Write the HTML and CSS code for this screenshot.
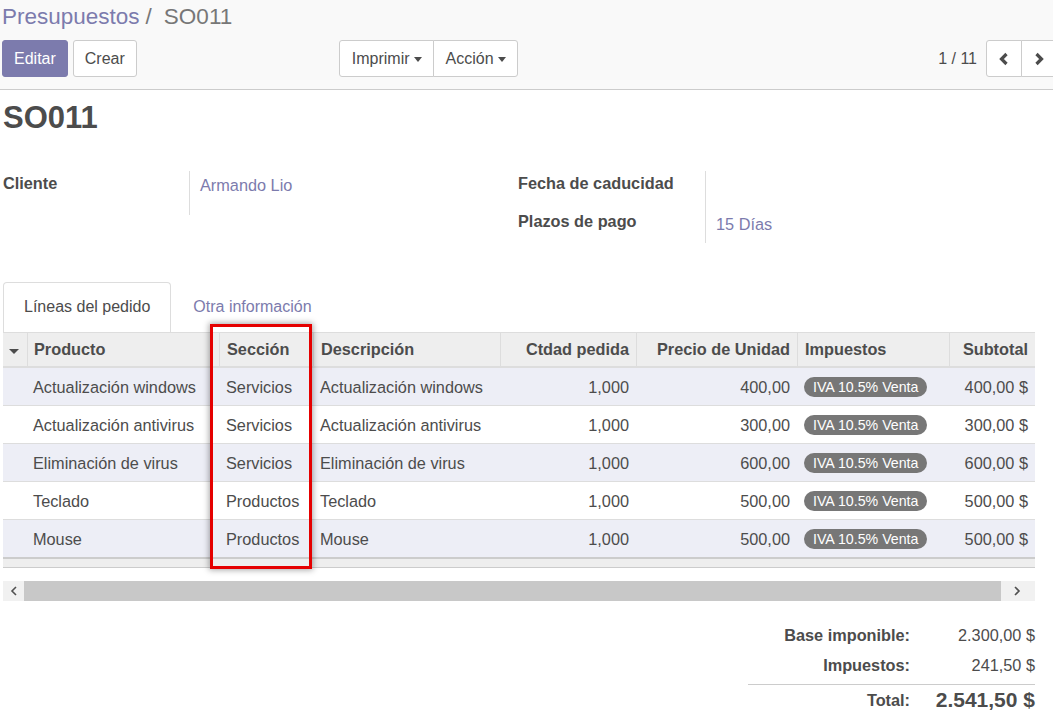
FILE: index.html
```html
<!DOCTYPE html>
<html lang="es">
<head>
<meta charset="utf-8">
<title>SO011</title>
<link rel="stylesheet" href="styles.css">
</head>
<body>
<div class="cp">
  <ol class="breadcrumb">
    <li class="crumb-link">Presupuestos</li>
    <li class="crumb-sep">/</li>
    <li class="crumb-active">SO011</li>
  </ol>
  <div class="cp-row">
    <div class="cp-buttons">
      <button class="btn btn-primary">Editar</button>
      <button class="btn btn-secondary">Crear</button>
    </div>
    <div class="btn-group sidebar">
      <button class="btn">Imprimir<span class="caret"></span></button>
      <button class="btn">Acción<span class="caret"></span></button>
    </div>
    <div class="pager">
      <span class="pager-value">1 / 11</span>
      <div class="btn-group">
        <button class="btn btn-icon" aria-label="Anterior"><svg width="12" height="14" viewBox="0 0 12 14"><polyline points="8.5,2 3.5,7 8.5,12" fill="none" stroke="#4c4c4c" stroke-width="3.2"/></svg></button>
        <button class="btn btn-icon" aria-label="Siguiente"><svg width="12" height="14" viewBox="0 0 12 14"><polyline points="3.5,2 8.5,7 3.5,12" fill="none" stroke="#4c4c4c" stroke-width="3.2"/></svg></button>
      </div>
    </div>
  </div>
</div>

<div class="sheet">
  <h1 class="title">SO011</h1>

  <div class="groups">
    <div class="group group-left">
      <div class="field field-client">
        <div class="label">Cliente</div>
        <div class="value link">Armando Lio</div>
      </div>
    </div>
    <div class="group group-right">
      <div class="field field-r1">
        <div class="label">Fecha de caducidad</div>
        <div class="value"></div>
      </div>
      <div class="field field-r2">
        <div class="label">Plazos de pago</div>
        <div class="value link">15 Días</div>
      </div>
    </div>
  </div>

  <div class="tabs">
    <div class="tab active">Líneas del pedido</div>
    <div class="tab">Otra información</div>
  </div>

  <div class="table-wrap">
    <table class="lines">
      <colgroup>
        <col class="c-caret"><col class="c-prod"><col class="c-sec"><col class="c-desc"><col class="c-qty"><col class="c-price"><col class="c-tax"><col class="c-sub">
      </colgroup>
      <thead>
        <tr>
          <th class="th-caret"><span class="sort-caret"></span></th>
          <th>Producto</th>
          <th>Sección</th>
          <th>Descripción</th>
          <th class="num">Ctdad pedida</th>
          <th class="num">Precio de Unidad</th>
          <th>Impuestos</th>
          <th class="num">Subtotal</th>
        </tr>
      </thead>
      <tbody>
        <tr class="odd"><td></td><td>Actualización windows</td><td>Servicios</td><td>Actualización windows</td><td class="num">1,000</td><td class="num">400,00</td><td><span class="badge">IVA 10.5% Venta</span></td><td class="num">400,00 $</td></tr>
        <tr><td></td><td>Actualización antivirus</td><td>Servicios</td><td>Actualización antivirus</td><td class="num">1,000</td><td class="num">300,00</td><td><span class="badge">IVA 10.5% Venta</span></td><td class="num">300,00 $</td></tr>
        <tr class="odd"><td></td><td>Eliminación de virus</td><td>Servicios</td><td>Eliminación de virus</td><td class="num">1,000</td><td class="num">600,00</td><td><span class="badge">IVA 10.5% Venta</span></td><td class="num">600,00 $</td></tr>
        <tr><td></td><td>Teclado</td><td>Productos</td><td>Teclado</td><td class="num">1,000</td><td class="num">500,00</td><td><span class="badge">IVA 10.5% Venta</span></td><td class="num">500,00 $</td></tr>
        <tr class="odd last"><td></td><td>Mouse</td><td>Productos</td><td>Mouse</td><td class="num">1,000</td><td class="num">500,00</td><td><span class="badge">IVA 10.5% Venta</span></td><td class="num">500,00 $</td></tr>
      </tbody>
      <tfoot>
        <tr><td colspan="8"></td></tr>
      </tfoot>
    </table>
  </div>

  <div class="hscroll">
    <div class="sb-btn"><svg width="8" height="10" viewBox="0 0 8 10"><polyline points="6,1 2,5 6,9" fill="none" stroke="#505050" stroke-width="1.6"/></svg></div>
    <div class="sb-thumb"></div>
    <div class="sb-track"></div>
    <div class="sb-btn sb-right"><svg width="8" height="10" viewBox="0 0 8 10"><polyline points="2,1 6,5 2,9" fill="none" stroke="#505050" stroke-width="1.6"/></svg></div>
  </div>

  <div class="totals">
    <div class="t-label">Base imponible:</div><div class="t-value">2.300,00 $</div>
    <div class="t-label">Impuestos:</div><div class="t-value">241,50 $</div>
    <div class="t-label t-total">Total:</div><div class="t-value t-total t-big">2.541,50 $</div>
  </div>
</div>

<div class="highlight"></div>
</body>
</html>
```

FILE: styles.css
```css
html, body {
  margin: 0;
  padding: 0;
  overflow: hidden;
  background: #fff;
}
body {
  font-family: "Liberation Sans", Arial, sans-serif;
  font-size: 16.3px;
  color: #4c4c4c;
  position: relative;
  width: 1053px;
  height: 717px;
}

/* Control panel */
.cp {
  background: #f9f9f9;
  border-bottom: 1px solid #cccccc;
  padding: 2px 0 12px 2px;
  overflow: hidden;
}
.breadcrumb {
  display: flex;
  list-style: none;
  margin: 0 0 8px 0;
  padding: 0;
  font-size: 22.5px;
  line-height: 30px;
  height: 30px;
}
.crumb-link { color: #7c7bad; }
.crumb-sep { color: #777; margin: 0 12px 0 6px; }
.crumb-active { color: #777; }

.cp-row {
  display: flex;
  align-items: center;
  height: 37px;
}
.btn {
  height: 37px;
  box-sizing: border-box;
  border: 1px solid #cccccc;
  background: #fff;
  color: #4c4c4c;
  font-family: inherit;
  font-size: 16px;
  padding: 0 11px;
  margin: 0;
  border-radius: 3px;
  display: inline-flex;
  align-items: center;
  cursor: pointer;
}
.btn-primary {
  background: #7c7bad;
  border-color: #7c7bad;
  color: #fff;
}
.btn-secondary { margin-left: 5px; }
.cp-buttons { display: flex; }

.btn-group { display: flex; }
.btn-group .btn { border-radius: 0; }
.btn-group .btn + .btn { margin-left: -1px; }
.btn-group .btn:first-child { border-radius: 3px 0 0 3px; }
.btn-group .btn:last-child { border-radius: 0 3px 3px 0; }

.sidebar { margin-left: 202px; }
.sidebar .btn { padding: 0 11px 0 12px; }
.caret {
  display: inline-block;
  width: 0;
  height: 0;
  margin-left: 4px;
  margin-top: 2px;
  border-top: 5px solid #4c4c4c;
  border-left: 4.5px solid transparent;
  border-right: 4.5px solid transparent;
}

.pager {
  margin-left: auto;
  margin-right: -4px;
  display: flex;
  align-items: center;
}
.pager-value { margin-right: 9px; font-size: 16px; }
.btn-icon {
  width: 36px;
  padding: 0;
  justify-content: center;
}

/* Sheet */
.sheet {
  padding: 0 0 0 3px;
}
.title {
  margin: 9px 0 0 0;
  font-size: 31px;
  line-height: 38px;
  font-weight: bold;
  color: #4c4c4c;
}

.groups {
  display: flex;
  margin-top: 34px;
}
.group-left { width: 515px; }
.group-right { width: 517px; }
.field { display: flex; }
.label {
  font-weight: bold;
  line-height: 20px;
  border-right: 1px solid #dddddd;
  box-sizing: border-box;
}
.value {
  line-height: 20px;
  padding-left: 10px;
}
.link { color: #7c7bad; }

.group-left .label { width: 187px; height: 44px; padding-top: 2px; }
.group-left .value { padding-top: 4px; }
.group-right .label { width: 188px; }
.field-r1 .label { height: 36px; padding-top: 2px; }
.field-r2 .label { height: 36px; padding-top: 4px; }
.field-r2 .value { padding-top: 7px; }

/* Tabs */
.tabs {
  display: flex;
  margin-top: 39px;
}
.tab {
  padding: 14px 20px 15px;
  line-height: 20px;
  border: 1px solid transparent;
  border-bottom: 0;
  border-radius: 4px 4px 0 0;
  margin-right: 1px;
  color: #7c7bad;
  font-size: 16px;
}
.tab.active {
  border-color: #dddddd;
  color: #4c4c4c;
  background: #fff;
}

/* Table */
.table-wrap {
  width: 1032px;
  overflow: hidden;
}
.lines {
  width: 1032px;
  table-layout: fixed;
  border-collapse: separate;
  border-spacing: 0;
}
.c-caret { width: 24px; }
.c-prod { width: 192px; }
.c-sec { width: 94px; }
.c-desc { width: 187px; }
.c-qty { width: 136px; }
.c-price { width: 161px; }
.c-tax { width: 152px; }
.c-sub { width: 86px; }

.lines th {
  background: #eeeeee;
  font-weight: bold;
  text-align: left;
  line-height: 20px;
  padding: 6px 7px 7px;
  border-top: 1px solid #dddddd;
  border-bottom: 2px solid #dddddd;
  border-left: 1px solid #dddddd;
  white-space: nowrap;
  overflow: hidden;
}
.lines th:nth-child(2) { padding-left: 6px; }
.lines th.th-caret {
  border-left: 0;
  padding: 0;
  text-align: center;
}
.sort-caret {
  display: inline-block;
  width: 0;
  height: 0;
  border-top: 5px solid #4c4c4c;
  border-left: 5px solid transparent;
  border-right: 5px solid transparent;
  vertical-align: middle;
  margin-right: 2px;
}
.lines td {
  line-height: 20px;
  padding: 9px 7px 8px;
  border-bottom: 1px solid #dddddd;
  white-space: nowrap;
  overflow: hidden;
}
.lines td:nth-child(2) { padding-left: 6px; }
.lines tr.odd td { background: #edeef6; }
.lines tr.last td { border-bottom: 2px solid #cccccc; }
.lines .num { text-align: right; }
.lines tfoot td {
  background: #eeeeee;
  height: 8px;
  padding: 0;
  border-bottom: 1px solid #cccccc;
}

.badge {
  display: inline-block;
  background: #777777;
  color: #fff;
  font-size: 14.2px;
  line-height: 20px;
  padding: 0 9px;
  border-radius: 10px;
  vertical-align: top;
}

/* fake horizontal scrollbar */
.hscroll {
  display: flex;
  width: 1032px;
  height: 20px;
  margin-top: 13px;
  background: #f1f1f1;
}
.sb-btn {
  width: 21px;
  display: flex;
  align-items: center;
  justify-content: center;
}
.sb-right { width: 25px; justify-content: flex-start; padding-left: 3px; box-sizing: border-box; }
.sb-thumb {
  flex: 1;
  background: #c8c8c8;
}
.sb-track { width: 9px; }

/* Totals */
.totals {
  display: grid;
  grid-template-columns: 162px 125px;
  width: 287px;
  margin: 19px 0 0 745px;
}
.t-label {
  font-weight: bold;
  text-align: right;
  line-height: 30px;
}
.t-value {
  text-align: right;
  line-height: 30px;
}
.t-total {
  border-top: 1px solid #cccccc;
  margin-top: 4px;
  line-height: 30px;
}
.t-big {
  font-weight: bold;
  font-size: 21px;
}

/* annotation overlay */
.highlight {
  position: absolute;
  left: 210px;
  top: 324px;
  width: 102px;
  height: 245px;
  box-sizing: border-box;
  border: 3px solid #e50000;
  box-shadow: 0 0 6px 1px rgba(0, 0, 0, 0.35);
  pointer-events: none;
}
```
